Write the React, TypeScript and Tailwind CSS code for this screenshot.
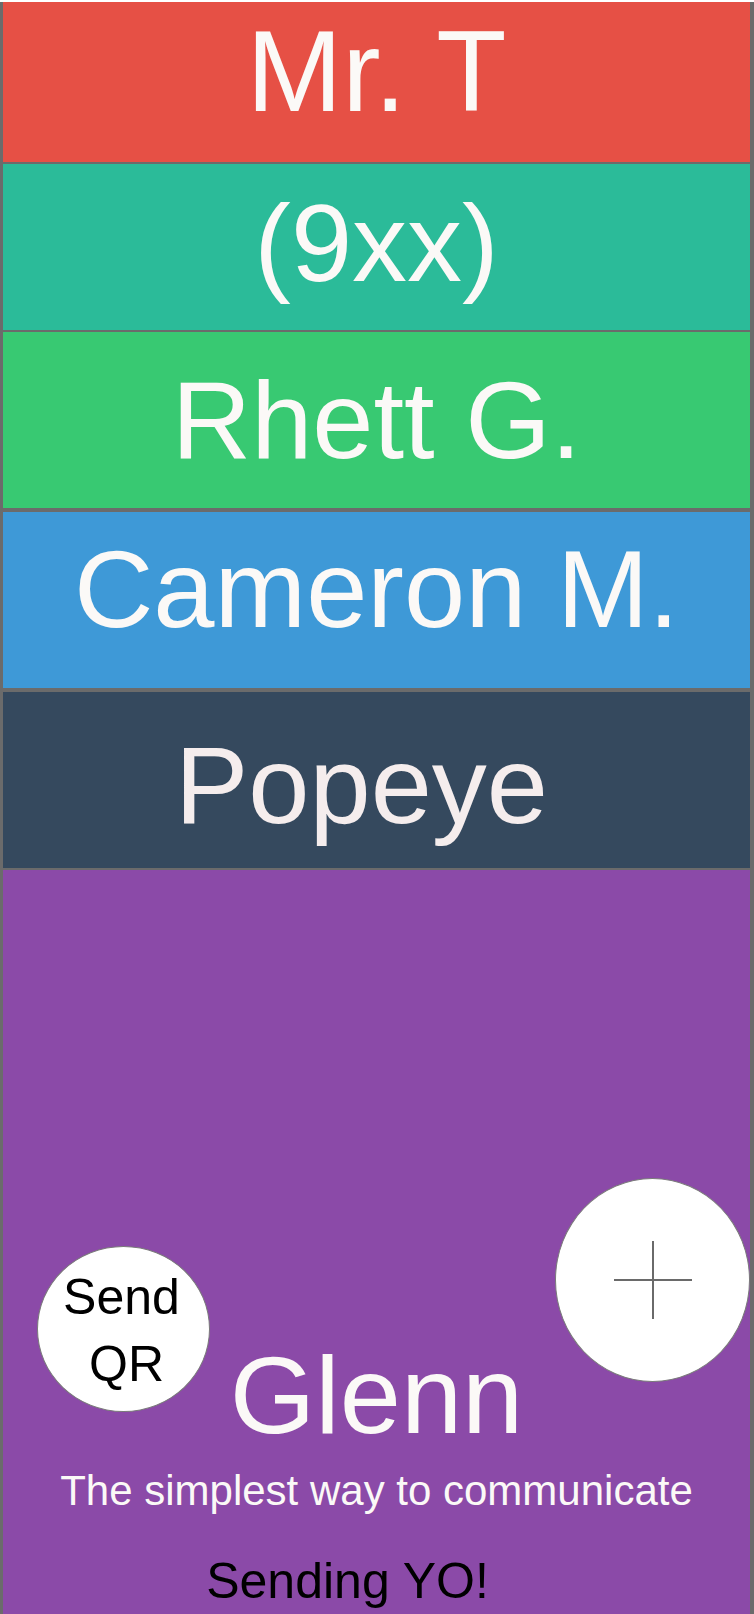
import React from "react";

const font = { fontFamily: '"Liberation Sans", Arial, sans-serif' };

export default function App() {
  return (
    <div className="w-[754px] h-[1614px] bg-white pt-[2px] overflow-hidden" style={font}>
      <div className="h-[1612px] bg-[#6b6b6b] pl-[3px] pr-[4px] flex flex-col">
        <div className="h-[160px] bg-[#e65045] pt-[12px] text-center text-[115px] leading-none text-[#fbf9f7]">
          Mr. T
        </div>
        <div className="mt-[2px] h-[166px] bg-[#2bbb99] pt-[24px] text-center text-[110px] leading-none text-[#fbf9f7]">
          (9xx)
        </div>
        <div className="mt-[2px] h-[176px] bg-[#38c972] pt-[33px] text-center text-[110px] leading-none text-[#fbf9f7]">
          Rhett G.
        </div>
        <div className="mt-[4px] h-[176px] bg-[#3e99d7] pt-[22px] text-center text-[110px] leading-none text-[#fbf9f7]">
          Cameron M.
        </div>
        <div className="mt-[4px] h-[176px] bg-[#35495e] pt-[38px] pr-[30px] text-center text-[110px] leading-none text-[#f5eded]">
          Popeye
        </div>
        <div className="relative mt-[2px] flex-1 bg-[#8b4aa8] pt-[470px] flex flex-col items-center">
          <div className="absolute left-[34px] top-[376px] w-[173px] h-[166px] rounded-[50%] bg-white border border-[#7a7a7a] flex flex-col items-center pt-[17px] pr-[4px] text-[50px] leading-[67px] text-black">
            <span>Send</span>
            <span className="pl-[10px]">QR</span>
          </div>
          <div className="absolute right-0 top-[308px] w-[195px] h-[204px] rounded-[50%] bg-white border border-[#7a7a7a] flex items-center justify-center">
            <svg width="80" height="80" viewBox="0 0 80 80">
              <line x1="1" y1="40" x2="79" y2="40" stroke="#6a6a6a" strokeWidth="2" />
              <line x1="40" y1="1" x2="40" y2="79" stroke="#6a6a6a" strokeWidth="2" />
            </svg>
          </div>
          <div className="text-[110px] leading-none text-[#fbf9f7]">Glenn</div>
          <div className="mt-[20px] text-[42px] leading-none text-[#fbf9f7]">
            The simplest way to communicate
          </div>
          <div className="mt-[44px] pr-[58px] text-[50px] leading-none text-black">Sending YO!</div>
        </div>
      </div>
    </div>
  );
}
